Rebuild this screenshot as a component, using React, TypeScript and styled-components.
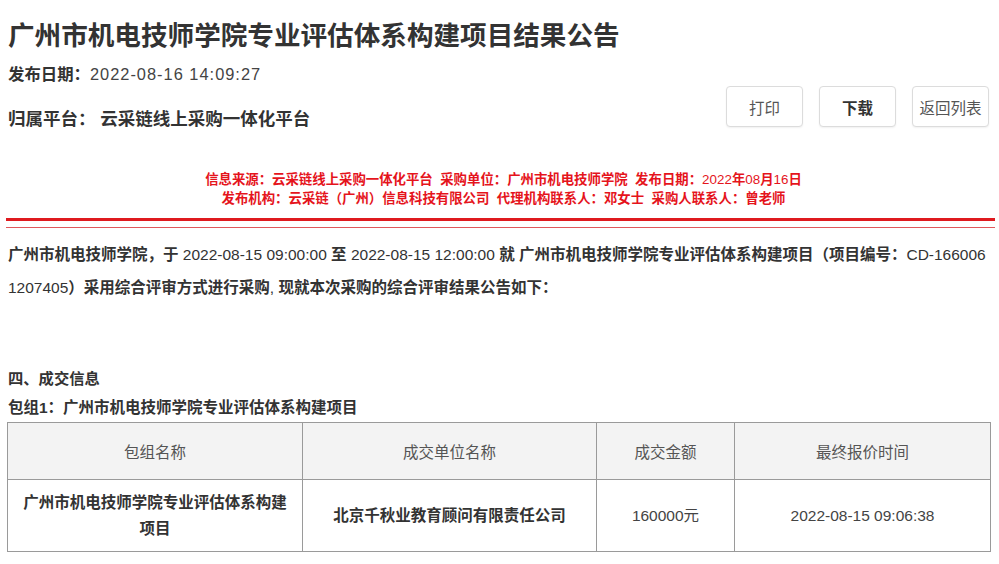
import React from 'react'
import styled, { createGlobalStyle } from 'styled-components'

const GlobalStyle = createGlobalStyle`
  html, body {
    margin: 0;
    padding: 0;
    background: #ffffff;
  }
  body {
    font-family: "Liberation Sans", "Noto Sans CJK SC", sans-serif;
    color: #333333;
  }
`

const columns = [
  { title: '包组名称', width: 295 },
  { title: '成交单位名称', width: 294 },
  { title: '成交金额', width: 138 },
  { title: '最终报价时间', width: 256 },
]

const App = () => {
  return (
    <Page>
      <GlobalStyle />
      <Title>广州市机电技师学院专业评估体系构建项目结果公告</Title>

      <MetaRow>
        <MetaInfo>
          <DateLine>
            <b>发布日期：</b>
            <DateValue>2022-08-16 14:09:27</DateValue>
          </DateLine>
          <PlatformLine>归属平台： 云采链线上采购一体化平台</PlatformLine>
        </MetaInfo>
        <Buttons>
          <Button>打印</Button>
          <Button $bold>下载</Button>
          <Button>返回列表</Button>
        </Buttons>
      </MetaRow>

      <SourceBlock>
        <SourceLine>
          信息来源：云采链线上采购一体化平台&nbsp;&nbsp;采购单位：广州市机电技师学院&nbsp;&nbsp;发布日期：<Num>2022</Num>年<Num>08</Num>月<Num>16</Num>日
        </SourceLine>
        <SourceLine>
          发布机构：云采链（广州）信息科技有限公司&nbsp;&nbsp;代理机构联系人：邓女士&nbsp;&nbsp;采购人联系人：曾老师
        </SourceLine>
      </SourceBlock>

      <ThickRule />
      <ThinRule />

      <Intro>
        <b>广州市机电技师学院，于</b> 2022-08-15 09:00:00 <b>至</b> 2022-08-15 12:00:00 <b>就 广州市机电技师学院专业评估体系构建项目（项目编号：</b>
        <span>CD-166006</span>
        <span>1207405</span>
        <b>）采用综合评审方式进行采购</b>, <b>现就本次采购的综合评审结果公告如下：</b>
      </Intro>

      <SectionTitle>四、成交信息</SectionTitle>
      <GroupTitle>包组1：广州市机电技师学院专业评估体系构建项目</GroupTitle>

      <ResultTable>
        <colgroup>
          {columns.map((c) => (
            <col key={c.title} style={{ width: c.width }} />
          ))}
        </colgroup>
        <thead>
          <tr>
            {columns.map((c) => (
              <HeadCell key={c.title}>{c.title}</HeadCell>
            ))}
          </tr>
        </thead>
        <tbody>
          <tr>
            <BodyCell $bold>广州市机电技师学院专业评估体系构建项目</BodyCell>
            <BodyCell $bold>北京千秋业教育顾问有限责任公司</BodyCell>
            <BodyCell>160000元</BodyCell>
            <BodyCell>2022-08-15 09:06:38</BodyCell>
          </tr>
        </tbody>
      </ResultTable>
    </Page>
  )
}

export default App

const Page = styled.div`
    padding: 16px 8px 0 8px;
    width: 999px;
    box-sizing: border-box;
`

const Title = styled.h1`
    margin: 0;
    font-size: 26.6px;
    line-height: 40px;
    font-weight: bold;
    color: #333333;
    white-space: nowrap;
`

const MetaRow = styled.div`
    display: flex;
    justify-content: space-between;
    align-items: flex-start;
`

const MetaInfo = styled.div`
    display: flex;
    flex-direction: column;
`

const DateLine = styled.div`
    margin-top: 6px;
    font-size: 16.4px;
    line-height: 24px;
    color: #444444;
    white-space: nowrap;

    b {
        color: #333333;
    }
`

const DateValue = styled.span`
    letter-spacing: 1px;
`

const PlatformLine = styled.div`
    margin-top: 21px;
    font-size: 17.5px;
    line-height: 24px;
    font-weight: bold;
    color: #333333;
    white-space: pre;
`

const Buttons = styled.div`
    display: flex;
    gap: 16px;
    margin-top: 30px;
    margin-right: 2px;
`

const Button = styled.button<{ $bold?: boolean }>`
    width: 77px;
    height: 41px;
    padding: 0;
    background: #ffffff;
    border: 1px solid #dcdcdc;
    border-radius: 4px;
    box-shadow: 0 1px 2px rgba(0, 0, 0, 0.06);
    font-family: "Liberation Sans", "Noto Sans CJK SC", sans-serif;
    font-size: 15.5px;
    font-weight: ${(p) => (p.$bold ? 'bold' : 'normal')};
    color: ${(p) => (p.$bold ? '#333333' : '#555555')};
    cursor: pointer;
`

const SourceBlock = styled.div`
    margin-top: 39px;
    padding-left: 8px;
    text-align: center;
`

const SourceLine = styled.div`
    font-size: 13.4px;
    line-height: 19px;
    font-weight: bold;
    color: #e5141c;
    white-space: nowrap;
`

const Num = styled.span`
    font-weight: normal;
`

const ThickRule = styled.div`
    margin: 10px -4px 0 -2px;
    height: 3px;
    background: #df1a1f;
`

const ThinRule = styled.div`
    margin: 6px -4px 0 -2px;
    height: 1px;
    background: #e0585c;
`

const Intro = styled.p`
    margin: 10px 0 0 0;
    font-size: 15.5px;
    line-height: 33px;
    color: #333333;
    word-break: break-all;

    b {
        font-weight: bold;
    }
`

const SectionTitle = styled.div`
    margin-top: 63px;
    font-size: 15.3px;
    line-height: 24px;
    font-weight: bold;
    color: #333333;
`

const GroupTitle = styled.div`
    margin-top: 5px;
    font-size: 15.5px;
    line-height: 24px;
    font-weight: bold;
    color: #333333;
`

const ResultTable = styled.table`
    margin: 2px 0 0 -1px;
    width: 983px;
    border-collapse: collapse;
    table-layout: fixed;
`

const HeadCell = styled.th`
    height: 56px;
    padding: 0 12px;
    border: 1px solid #9a9a9a;
    background: #f3f3f3;
    font-size: 15.5px;
    font-weight: normal;
    color: #555555;
    text-align: center;
`

const BodyCell = styled.td<{ $bold?: boolean }>`
    height: 71px;
    padding: 0 12px;
    border: 1px solid #9a9a9a;
    font-size: 15.5px;
    line-height: 26px;
    font-weight: ${(p) => (p.$bold ? 'bold' : 'normal')};
    color: ${(p) => (p.$bold ? '#333333' : '#444444')};
    text-align: center;
`
